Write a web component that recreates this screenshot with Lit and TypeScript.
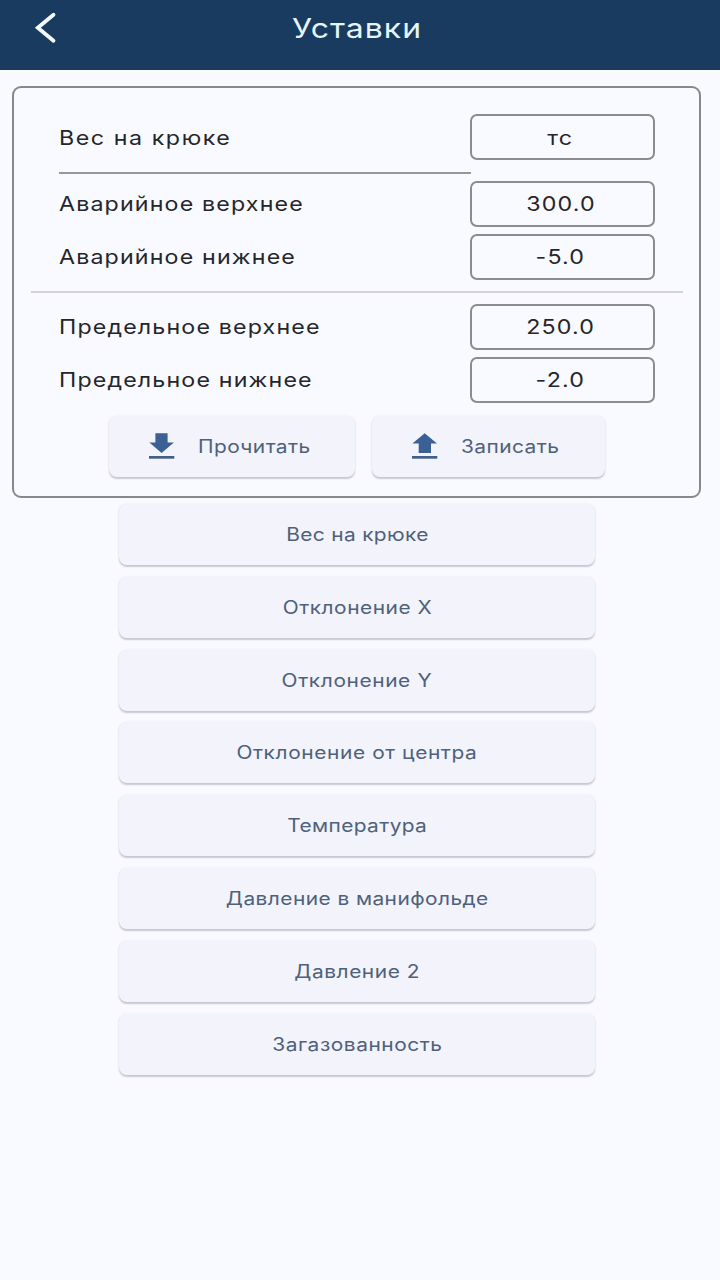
import { LitElement, html, css, svg } from "lit";
import { customElement, state } from "lit/decorators.js";

interface Setpoint {
  label: string;
  value: string;
}

interface Section {
  name: string;
  tracking: number;
}

@customElement("app-root")
export class AppRoot extends LitElement {
  @state() private groups: Setpoint[][] = [
    [
      { label: "Аварийное верхнее", value: "300.0" },
      { label: "Аварийное нижнее", value: "-5.0" },
    ],
    [
      { label: "Предельное верхнее", value: "250.0" },
      { label: "Предельное нижнее", value: "-2.0" },
    ],
  ];

  private sections: Section[] = [
    { name: "Вес на крюке", tracking: 0.3 },
    { name: "Отклонение X", tracking: 0.45 },
    { name: "Отклонение Y", tracking: 0.52 },
    { name: "Отклонение от центра", tracking: 0.52 },
    { name: "Температура", tracking: 0.32 },
    { name: "Давление в манифольде", tracking: 0.38 },
    { name: "Давление 2", tracking: 0.47 },
    { name: "Загазованность", tracking: 0.47 },
  ];

  static styles = css`
    :host {
      display: flex;
      flex-direction: column;
      box-sizing: border-box;
      height: 1280px;
      background: #f9faff;
      font-family: Inter, Roboto, sans-serif;
      font-weight: 385;
      color: #25262a;
    }
    * {
      box-sizing: border-box;
    }
    .bar {
      display: grid;
      grid-template-columns: 90px 1fr 90px;
      align-items: center;
      height: 70px;
      padding: 0 6px 14px 0;
      background: #1a3b60;
      color: #e6f5fa;
      flex: none;
    }
    .back {
      display: block;
      margin-left: 34px;
    }
    .title {
      text-align: center;
      font-size: 27.5px;
      line-height: 34px;
      letter-spacing: 0.9px;
    }
    .wide {
      display: inline-block;
      white-space: nowrap;
      transform: scaleX(1.16);
    }
    .card {
      margin: 16px 19px 0 12px;
      height: 412px;
      border: 2px solid #87888c;
      border-radius: 9px;
      padding: 26px 16px 0 17px;
      flex: none;
    }
    .row {
      display: flex;
      align-items: center;
      justify-content: space-between;
      height: 46px;
      padding: 0 28px;
      font-size: 20px;
      letter-spacing: 1px;
    }
    .label {
      transform-origin: left;
    }
    .heading {
      letter-spacing: 1.35px;
      padding-top: 2px;
    }
    .value {
      display: grid;
      place-items: center;
      width: 185px;
      height: 46px;
      border: 2px solid #8b8c90;
      border-radius: 7px;
      padding: 0 4px 0 0;
    }
    .unit {
      padding-top: 2px;
    }
    .rule {
      width: 412px;
      height: 2px;
      margin: 12px 0 7px 28px;
      background: #96979b;
    }
    .group {
      display: flex;
      flex-direction: column;
      gap: 7px;
    }
    .split {
      height: 2px;
      margin: 11px 0;
      background: #d0d2dc;
    }
    .actions {
      display: flex;
      gap: 17px;
      margin: 13px 0 0 78px;
    }
    .btn {
      display: flex;
      align-items: center;
      justify-content: center;
      height: 61px;
      border-radius: 8px;
      background: #f2f3fb;
      color: #4f617a;
      font-size: 18px;
      letter-spacing: 0.38px;
      box-shadow: 0 1.5px 1.5px rgba(60, 62, 80, 0.25), 0 0 3px rgba(60, 62, 80, 0.06);
    }
    .action {
      justify-content: flex-start;
      padding-left: 40px;
      gap: 23px;
    }
    .write {
      padding-left: 39.5px;
    }
    .action .wide {
      transform-origin: left;
    }
    .read {
      width: 246px;
    }
    .write {
      width: 233px;
    }
    .icon {
      display: block;
      flex: none;
      margin-top: -2px;
      fill: #3a6096;
    }
    .list {
      display: grid;
      grid-auto-rows: 72.8px;
      width: 476px;
      margin: 6px 0 0 119px;
    }
  `;

  private icon(arrow: string) {
    return html`<svg class="icon" width="26" height="26" viewBox="0 0 26 26">
      ${svg`<path d=${arrow} />`}
      <path fill="#435f88" d="M0 23h25.3v2.7H0z" />
    </svg>`;
  }

  render() {
    return html`
      <header class="bar">
        <svg class="back" width="24" height="32" viewBox="0 0 24 32">
          <path d="M19.5 2.8 3.8 15.8 19.5 28.8" fill="none" stroke="#f4fbff" stroke-width="3.8" stroke-linecap="round" />
        </svg>
        <div class="title"><span class="wide">Уставки</span></div>
      </header>
      <section class="card">
        <div class="row">
          <span class="wide label heading">Вес на крюке</span>
          <div class="value"><span class="wide unit">тс</span></div>
        </div>
        <div class="rule"></div>
        ${this.groups.map(
          (group, i) => html`
            ${i ? html`<div class="split"></div>` : null}
            <div class="group">
              ${group.map(
                (s) => html`<div class="row">
                  <span class="wide label">${s.label}</span>
                  <div class="value"><span class="wide">${s.value}</span></div>
                </div>`
              )}
            </div>
          `
        )}
        <div class="actions">
          <div class="btn action read">
            ${this.icon("M6.4 0.3h12.2v9.2h6.3L12.6 20 0.4 9.5h6z")}
            <span class="wide">Прочитать</span>
          </div>
          <div class="btn action write">
            ${this.icon("M12.7 0.3 25 10.5h-6V20H6.7v-9.5H0.4z")}
            <span class="wide">Записать</span>
          </div>
        </div>
      </section>
      <nav class="list">
        ${this.sections.map(
          (s) => html`<div class="btn" style="letter-spacing:${s.tracking}px"><span class="wide">${s.name}</span></div>`
        )}
      </nav>
    `;
  }
}
